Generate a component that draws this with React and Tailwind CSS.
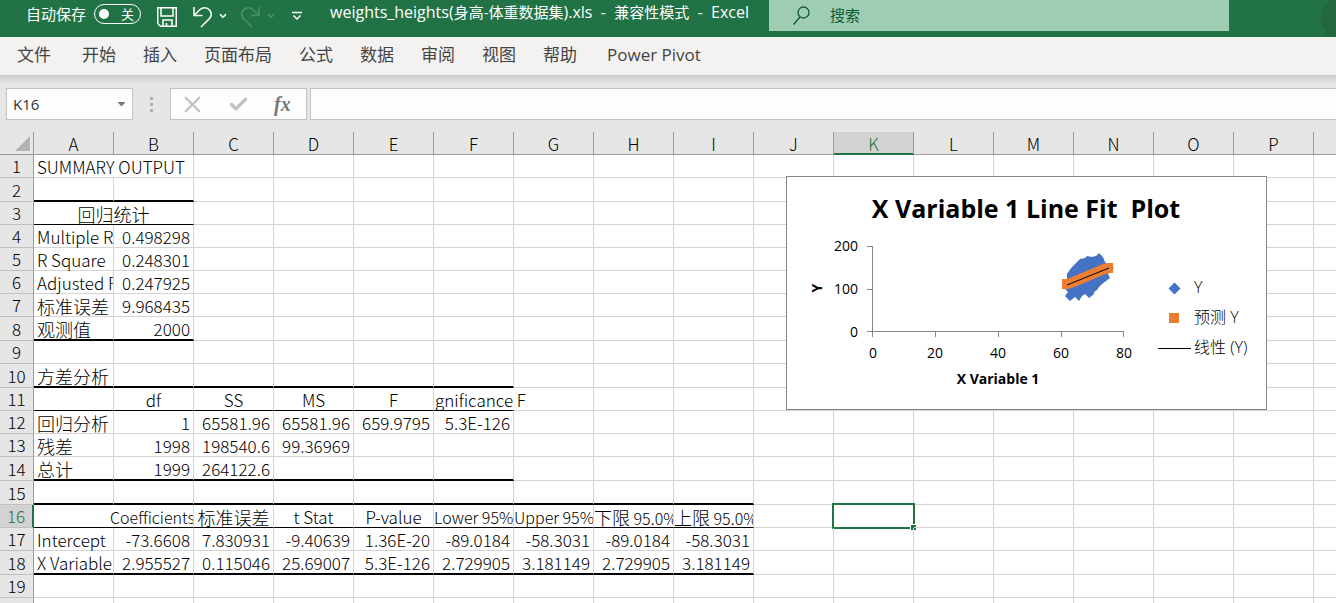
import { ChevronDown, Check, X } from 'lucide-react'

const cols = 'ABCDEFGHIJKLMNOP'.split('')

// rule is the line under a row, span is how many columns it covers
const rows = [
  { cells: { A: { t: 'SUMMARY OUTPUT', colSpan: 2 } } },
  { rule: 'thick', span: 2 },
  { rule: 'thin', span: 2, cells: { A: { t: '回归统计', colSpan: 2, align: 'center', cjk: true } } },
  { cells: { A: { t: 'Multiple R' }, B: { t: '0.498298' } } },
  { cells: { A: { t: 'R Square' }, B: { t: '0.248301' } } },
  { cells: { A: { t: 'Adjusted R' }, B: { t: '0.247925' } } },
  { cells: { A: { t: '标准误差', cjk: true }, B: { t: '9.968435' } } },
  { rule: 'thick', span: 2, cells: { A: { t: '观测值', cjk: true }, B: { t: '2000' } } },
  {},
  { rule: 'thick', span: 6, cells: { A: { t: '方差分析', cjk: true } } },
  {
    rule: 'thin',
    span: 6,
    cells: {
      B: { t: 'df', align: 'center' },
      C: { t: 'SS', align: 'center' },
      D: { t: 'MS', align: 'center' },
      E: { t: 'F', align: 'center' },
      F: { t: 'gnificance F', align: 'spill' },
    },
  },
  {
    cells: {
      A: { t: '回归分析', cjk: true },
      B: { t: '1' },
      C: { t: '65581.96' },
      D: { t: '65581.96' },
      E: { t: '659.9795' },
      F: { t: '5.3E-126' },
    },
  },
  { cells: { A: { t: '残差', cjk: true }, B: { t: '1998' }, C: { t: '198540.6' }, D: { t: '99.36969' } } },
  { rule: 'thick', span: 6, cells: { A: { t: '总计', cjk: true }, B: { t: '1999' }, C: { t: '264122.6' } } },
  { rule: 'thick', span: 9 },
  {
    rule: 'thin',
    span: 9,
    cells: {
      A: { t: 'Coefficients', colSpan: 2, align: 'indent' },
      C: { t: '标准误差', align: 'center', cjk: true },
      D: { t: 't Stat', align: 'center' },
      E: { t: 'P-value', align: 'center' },
      F: { t: 'Lower 95%', align: 'flush' },
      G: { t: 'Upper 95%', align: 'flush' },
      H: { t: '下限', tail: ' 95.0%', align: 'flush', cjk: true },
      I: { t: '上限', tail: ' 95.0%', align: 'flush', cjk: true },
    },
  },
  {
    cells: {
      A: { t: 'Intercept' },
      B: { t: '-73.6608' },
      C: { t: '7.830931' },
      D: { t: '-9.40639' },
      E: { t: '1.36E-20' },
      F: { t: '-89.0184' },
      G: { t: '-58.3031' },
      H: { t: '-89.0184' },
      I: { t: '-58.3031' },
    },
  },
  {
    rule: 'thick',
    span: 9,
    cells: {
      A: { t: 'X Variable' },
      B: { t: '2.955527' },
      C: { t: '0.115046' },
      D: { t: '25.69007' },
      E: { t: '5.3E-126' },
      F: { t: '2.729905' },
      G: { t: '3.181149' },
      H: { t: '2.729905' },
      I: { t: '3.181149' },
    },
  },
  {},
  {},
]

const aligns = {
  left: 'pl-[3px] text-left overflow-x-clip',
  right: 'pr-[3px] text-right',
  center: 'text-center',
  flush: 'text-left overflow-x-clip',
  spill: 'pl-px text-left',
  indent: 'pl-[76px] text-left overflow-x-clip',
}

const tabs = ['文件', '开始', '插入', '页面布局', '公式', '数据', '审阅', '视图', '帮助', 'Power Pivot']

function Cell({ cell, rule, colSpan, selected }) {
  let align = 'left'
  if (cell) align = cell.align || (/^-?\d/.test(cell.t) ? 'right' : 'left')
  const bottom =
    rule === 'thick'
      ? 'border-b-2 border-b-black'
      : rule === 'thin'
        ? 'border-b border-b-black'
        : 'border-b border-b-[#d4d4d4]'
  const right = align === 'spill' ? 'border-r border-r-white' : 'border-r border-r-[#d4d4d4]'
  const tight = align === 'flush' || align === 'indent'
  const size = cell?.cjk ? 'text-[18px]' : tight ? 'text-base' : 'text-[17px]'
  return (
    <td colSpan={colSpan} className={`relative p-0 ${bottom} ${right}`}>
      {cell && (
        <div className={`h-[22px] whitespace-nowrap leading-[24px] ${aligns[align]} ${size}`}>
          {cell.t}
          {cell.tail && <span className="text-base leading-none">{cell.tail}</span>}
        </div>
      )}
      {selected && (
        <div className="absolute -top-[2px] -left-[2px] -right-[2px] -bottom-[2px] border-2 border-[#217346]">
          <span className="absolute -right-[3px] -bottom-[3px] h-[6px] w-[6px] border-t border-l border-white bg-[#217346]" />
        </div>
      )}
    </td>
  )
}

function Row({ row, n }) {
  const tds = []
  let i = 0
  while (i < cols.length) {
    const cell = row.cells?.[cols[i]]
    const colSpan = cell?.colSpan || 1
    tds.push(
      <Cell
        key={cols[i]}
        cell={cell}
        colSpan={colSpan}
        rule={row.rule && i < row.span ? row.rule : null}
        selected={n === 16 && cols[i] === 'K'}
      />
    )
    i += colSpan
  }
  const head =
    n === 16
      ? 'bg-[#d2d2d2] text-[#217346] border-r-2 border-r-[#217346]'
      : 'bg-[#e6e6e6] text-black border-r border-r-[#9b9b9b]'
  return (
    <tr className={row.rule === 'thick' ? 'h-[24px]' : 'h-[23px]'}>
      <th scope="row" className={`p-0 border-b border-b-[#c0c0c0] text-center text-[17px] leading-[22px] font-light ${head}`}>
        {n}
      </th>
      {tds}
      <td className="border-b border-b-[#d4d4d4]" />
    </tr>
  )
}

function Chart() {
  return (
    <svg
      className="absolute left-[786px] top-[44px] h-[234px] w-[481px] border border-[#868686] bg-white font-normal font-['Open_Sans','Noto_Sans_CJK_SC',sans-serif]"
      viewBox="1 1 479 232"
      role="img"
      aria-label="X Variable 1 Line Fit Plot"
    >
      <text x="240" y="42" textAnchor="middle" className="text-[25px] font-bold whitespace-pre">X Variable 1 Line Fit  Plot</text>
      <path
        d="M86.5 70v91M81 70.5h5M81 113.5h5M81 155.5h256.5M149.5 155v6M212.5 155v6M275.5 155v6M337.5 155v6"
        fill="none"
        stroke="#868686"
      />
      <g className="text-sm" textAnchor="end">
        <text x="72" y="75">200</text>
        <text x="72" y="118">100</text>
        <text x="72" y="161">0</text>
      </g>
      <g className="text-sm" textAnchor="middle">
        <text x="87" y="182">0</text>
        <text x="149" y="182">20</text>
        <text x="212" y="182">40</text>
        <text x="275" y="182">60</text>
        <text x="338" y="182">80</text>
      </g>
      <text x="212" y="208" textAnchor="middle" className="text-sm font-bold">X Variable 1</text>
      <text transform="translate(36 112) rotate(-90)" textAnchor="middle" className="text-sm font-bold">Y</text>
      {/* observed points, fitted points, trend line */}
      <path
        d="M281 105L281 98L283 95L286 91L289 88L291 86L294 83L299 82L301 80L306 81L310 80L313 77L317 81L319 86L321 88L328 92L322 98L324 102L320 105L316 108L313 111L311 114L308 116L308 118L303 122L299 118L296 120L293 125L289 121L284 125L279 120L282 116L278 112Z"
        fill="#4472c4"
      />
      <path d="M276 103h5l5-2 31-13 5-1h5v10h-4l-6 2-26 11-5 2-5 1h-5z" fill="#ed7d31" />
      <path d="M281 109l42-17" stroke="#000" />
      <path d="M388.5 106.5l6 6-6 6-6-6z" fill="#4472c4" />
      <path d="M383 137h10v10h-10z" fill="#ed7d31" />
      <path d="M372 172.5h33" stroke="#000" />
      <g className="text-base font-light">
        <text x="408" y="117">Y</text>
        <text x="408" y="147">预测 Y</text>
        <text x="408" y="177">线性 (Y)</text>
      </g>
    </svg>
  )
}

function TitleBar() {
  return (
    <header className="relative flex h-[37px] shrink-0 items-start overflow-hidden bg-[#217346] pl-[26px] text-white">
      <label htmlFor="autosave" className="pt-[3px] text-[15px] leading-[22px]">自动保存</label>
      <button
        id="autosave"
        role="switch"
        aria-checked="false"
        className="ml-2 mt-1 flex h-5 w-[47px] items-center justify-between rounded-full border border-white pl-1 pr-[6px]"
      >
        <span className="h-[10px] w-[10px] rounded-full bg-white" />
        <span className="text-[13px] leading-none">关</span>
      </button>
      <button aria-label="保存" className="ml-4 mt-[7px]">
        <svg width="20" height="20" viewBox="0 0 20 20" fill="none" stroke="currentColor" strokeWidth="1.5">
          <path d="M.75.75h18.5v18.5H3.5L.75 16.5zM4 1v8h12V1M6 19v-6h9v6M9.5 19v-3" />
        </svg>
      </button>
      <button aria-label="撤消" className="ml-4 mt-[6px]">
        <svg width="19" height="22" viewBox="0 0 19 22" fill="none" stroke="currentColor" strokeWidth="1.5">
          <path d="M1 1v8.5h8.5M1 9.5L7 3.5C10 1 14 1 16.5 4s2.3 6 0 8.5L8 21" />
        </svg>
      </button>
      <button aria-label="撤消列表" className="ml-[6px] mt-[11px]">
        <ChevronDown size={10} strokeWidth={4} />
      </button>
      <button aria-label="恢复" disabled className="ml-[13px] mt-[6px] text-[#4d9068]">
        <svg width="19" height="22" viewBox="0 0 19 22" fill="none" stroke="currentColor" strokeWidth="1.5">
          <path d="M18 1v8.5H9.5M18 9.5L12 3.5C9 1 5 1 2.5 4s-2.3 6 0 8.5L11 21" />
        </svg>
      </button>
      <button aria-label="恢复列表" disabled className="ml-[6px] mt-[11px] text-[#4d9068]">
        <ChevronDown size={10} strokeWidth={4} />
      </button>
      <button aria-label="自定义快速访问工具栏" className="ml-4 mt-[11px]">
        <svg width="10" height="10" viewBox="0 0 10 10" fill="none" stroke="currentColor" strokeWidth="1.5">
          <path d="M0 1.5h10M1.5 4.5L5 8l3.5-3.5" />
        </svg>
      </button>
      <h1 className="ml-7 w-[439px] whitespace-pre pt-[1px] text-base leading-[22px]">
        weights_heights(<span className="text-[15px]">身高-体重数据集</span>).xls{'  -  '}
        <span className="text-[15px]">兼容性模式</span>{'  -  '}Excel
      </h1>
      <div className="flex h-[31px] w-[460px] items-center bg-[#9fcdb3] pl-6 text-[#0f5a31]">
        <svg width="17" height="19" viewBox="0 0 17 19" fill="none" stroke="currentColor" strokeWidth="1.3">
          <circle cx="10.5" cy="6.5" r="5.5" />
          <path d="M7 11L.5 18.5" />
        </svg>
        <input
          aria-label="搜索"
          placeholder="搜索"
          className="ml-5 flex-1 bg-transparent text-[15px] outline-none placeholder:text-[#0f5a31]"
        />
      </div>
      <svg className="absolute right-0 top-0" width="16" height="37" viewBox="0 0 16 37" fill="#25673f">
        <path d="M11 0C3 6-1 14 1 22c1 4 3 7 5 9l-2 6h12V0z" />
      </svg>
    </header>
  )
}

function FormulaBar() {
  return (
    <div className="flex h-[57px] shrink-0 items-start bg-[linear-gradient(#cdcdcd,#e6e6e6_9px)] pl-[6px] pt-[13px]">
      <div className="flex h-8 w-[127px] items-center border border-[#c3c3c3] bg-[#fdfdfd] pl-[6px] pr-[6px]">
        <input aria-label="名称框" defaultValue="K16" className="min-w-0 flex-1 bg-transparent text-[15px] text-[#333] outline-none" />
        <button aria-label="名称列表">
          <svg width="9" height="5" viewBox="0 0 9 5" fill="#777">
            <path d="M0.5 0h8l-4 4.5z" />
          </svg>
        </button>
      </div>
      <div className="ml-[17px] flex h-8 w-[4px] flex-col justify-center gap-[3px]">
        <span className="h-[3px] w-[3px] bg-[#b0b0b0]" />
        <span className="h-[3px] w-[3px] bg-[#b0b0b0]" />
        <span className="h-[3px] w-[3px] bg-[#b0b0b0]" />
      </div>
      <div className="ml-4 flex h-8 w-[137px] items-center border border-[#c3c3c3] bg-[#fdfdfd] pl-2 text-[#c3c3c3]">
        <button aria-label="取消"><X size={27} strokeWidth={2} /></button>
        <button aria-label="输入" className="ml-[22px]"><Check size={21} strokeWidth={4} /></button>
        <button aria-label="插入函数" className="ml-[25px] font-['Liberation_Serif',serif] text-xl leading-none font-bold italic text-[#777]">
          fx
        </button>
      </div>
      <input aria-label="编辑栏" className="ml-[3px] h-8 flex-1 border border-r-0 border-[#c3c3c3] bg-[#fdfdfd] px-2 text-[15px] outline-none" />
    </div>
  )
}

export default function App() {
  return (
    <div className="h-screen flex flex-col overflow-hidden bg-[#e6e6e6] font-['Open_Sans','Noto_Sans_CJK_SC',sans-serif]">
      <TitleBar />
      <nav className="flex h-[38px] shrink-0 items-center gap-[27px] bg-[#f3f2f1] pl-[17px] pb-[2px] text-[17px] text-[#444]">
        {tabs.map((t, i) => (
          <button key={t} className={i === 0 ? 'mr-1' : i === tabs.length - 1 ? 'ml-[3px]' : ''}>{t}</button>
        ))}
      </nav>
      <FormulaBar />
      <main className="relative flex-1 bg-white text-black font-light font-['Noto_Sans_CJK_SC',sans-serif]">
        <table className="w-full table-fixed border-separate border-spacing-0">
          <colgroup>
            <col className="w-[34px]" />
            {cols.map(c => <col key={c} className="w-[80px]" />)}
            <col />
          </colgroup>
          <thead>
            <tr className="h-[23px] bg-[#e6e6e6]">
              <th className="border-b border-r border-[#9b9b9b] p-0">
                <svg className="ml-auto mr-[3px]" width="15" height="15" viewBox="0 0 15 15" fill="#b3b3b3">
                  <path d="M15 0v15H0z" />
                </svg>
              </th>
              {cols.map(c => (
                <th
                  key={c}
                  scope="col"
                  className={`border-r border-r-[#9b9b9b] p-0 align-bottom text-[17px] font-light ${
                    c === 'K'
                      ? 'border-b-2 border-b-[#217346] bg-[#d2d2d2] leading-[19px] text-[#217346]'
                      : 'border-b border-b-[#9b9b9b] leading-[21px]'
                  }`}
                >
                  {c}
                </th>
              ))}
              <th className="border-b border-[#9b9b9b]" />
            </tr>
          </thead>
          <tbody>
            {rows.map((row, i) => <Row key={i} row={row} n={i + 1} />)}
          </tbody>
        </table>
        <Chart />
      </main>
    </div>
  )
}
